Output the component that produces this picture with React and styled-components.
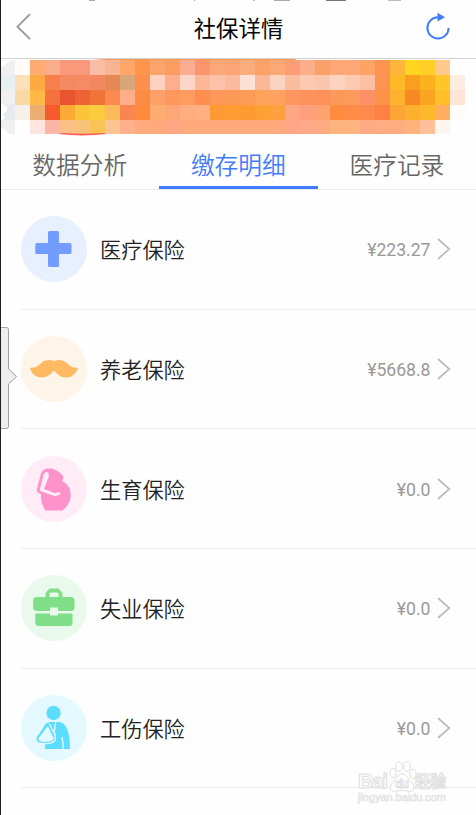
import React from "react";
import styled, { createGlobalStyle } from "styled-components";

const Global = createGlobalStyle`
  * { box-sizing: border-box; }
  body { margin: 0; background: #fefefe; }
`;

const Screen = styled.main`
  position: relative;
  display: flex;
  flex-direction: column;
  width: 476px;
  height: 815px;
  overflow: hidden;
  border-left: 1px solid #202020;
  background: #fefefe;
  font-family: Roboto, "Noto Sans CJK SC", sans-serif;
`;

const Header = styled.header`
  display: grid;
  grid-template-columns: 60px 1fr 60px;
  align-items: center;
  height: 59px;
  padding-bottom: 4px;
  border-bottom: 1px solid #d2d2d2;
`;

const Title = styled.h1`
  margin: 0;
  padding-bottom: 1px;
  text-align: center;
  font-family: "Noto Sans CJK SC", sans-serif;
  font-size: 22.4px;
  line-height: 32px;
  font-weight: 400;
  color: #050505;
`;

const IconButton = styled.button`
  display: flex;
  justify-content: ${(p) => (p.$end ? "flex-end" : "flex-start")};
  padding: 0 ${(p) => (p.$end ? 25 : 0)}px 0 ${(p) => (p.$end ? 0 : 14)}px;
  border: 0;
  background: none;
`;

const StatusTraces = styled.div`
  position: absolute;
  top: 0;
  left: 0;
  width: 475px;
  height: 1px;
  background: linear-gradient(90deg, transparent 88px, #aaa 88px 94px, transparent 94px 193px, #999 193px 194px,
    transparent 194px 252px, #bbb 252px 254px, transparent 254px 273px, #aaa 273px 289px, transparent 289px 325px,
    #777 325px 345px, transparent 345px 387px, #bbb 387px 400px, transparent 400px);
`;

const Banner = styled.section`
  position: relative;
  display: grid;
  grid-template-columns: repeat(31, 15px);
  grid-template-rows: repeat(4, 15px) 14px;
  height: 80px;
  margin-left: -1px;
  padding-top: 1px;
  background: linear-gradient(90deg, transparent 92px, #ff9950 105px 295px, transparent 296px) 0 0 / 100% 2px no-repeat;
`;

const Tile = styled.i`
  background: ${(p) => p.$color};
`;

const BannerArc = styled.svg`
  position: absolute;
  left: 40px;
  top: 73px;
`;

const TornEdge = styled.svg`
  position: absolute;
  left: 0;
  top: 0;
`;

const Tabs = styled.nav`
  display: grid;
  grid-template-columns: repeat(3, 158.6px);
  height: 51px;
  margin-left: -0.6px;
  border-bottom: 1px solid #e9e9e9;
`;

const Tab = styled.a`
  padding-top: 7px;
  text-align: center;
  font-family: "Noto Sans CJK SC", sans-serif;
  font-size: 23.7px;
  line-height: 36px;
  height: 50px;
  font-weight: 350;
  color: ${(p) => (p.$active ? "#427bff" : "#666")};
  border-bottom: 3px solid ${(p) => (p.$active ? "#427bff" : "transparent")};
`;

const List = styled.ul`
  margin: 0;
  padding: 0 0 0 20px;
  list-style: none;
`;

const Row = styled.li`
  display: flex;
  align-items: center;
  height: 119.65px;
  padding-right: 25px;
  border-bottom: 1px solid #eee;
`;

const Badge = styled.span`
  flex: none;
  width: 66px;
  height: 66px;
  border-radius: 50%;
  background: ${(p) => p.$tint};
  color: ${(p) => p.$ink};

  svg { display: block; }
`;

const Name = styled.span`
  flex: 1;
  padding: 0.2px 0 0 13px;
  font-family: "Noto Sans CJK SC", sans-serif;
  font-size: 21.2px;
  line-height: 32px;
  font-weight: 350;
  color: #222;
`;

const Amount = styled.span`
  margin-right: 6.5px;
  padding-top: 2px;
  font-size: 17.6px;
  line-height: 22px;
  color: #999;
`;

const Handle = styled.svg`
  position: absolute;
  left: 0;
  top: 326px;
`;

const Watermark = styled.svg`
  position: absolute;
  left: 354px;
  top: 757px;
`;

const tiles = [
  "f0f0f0 fffcfa ffab72 f9ad8a f9997c f9997c fabda8 f8b594 fea768 fd964c fba56c fd9e60 fbac91 fb9570 fba777 fba475 fcad7e fca268 fca875 fb9d77 fcae89 faa16a fca775 fca775 fda366 fc9550 feb53c ffd51f ffce27 ffca8b fffefe",
  "e7eff3 fcdfbb ffa943 f67f4b f48861 f58b62 f38761 e48854 d8a679 fd904d fdd2c0 fcae8f fcd6c8 fcb896 fcc1ab fbb99d fde1d6 fbb896 fbd4c1 fbbda0 fccab3 fcc6ae fad4c1 fcc9b1 fcbfa4 fd9350 fdb926 fa9e20 fcb21e ffc629 feece2",
  "f0f0f0 f8daa7 ffb944 f5713e e8542f ee6333 f07338 fb8950 ffae8b fb8c44 fea068 fd985c fe9b60 fe8f50 fd985a fd9a57 fd9b57 fda35c fda260 fd965f fd925c fe9058 fc985a fe9a5c fd9066 fd9347 fdb12e f78822 faa422 ffbf28 fee5d7",
  "e6eaee f7efe9 ecad73 f75b2c fcaa36 fbc43a fbcd3e fdba5c f98550 ff8a3e feac72 fea676 ffac7e ffaf80 ff9933 ff9b33 ff9932 ffa035 ffa03f ffa687 ff9f7c ffa272 ff8b40 ff8c46 ff8a4c ff8045 ffa436 fdb02c fdb82c ffae60 fffcfa",
  "f0f0f0 ffffff fee5df fcb4a6 fbc087 f9c377 fac355 fcc48f fdb08a ffab7d ffaa7b ffa684 ffa97e ffaa7b ffaa7c ffaa7c ffaa7c ffaa7c ffaa7c ffa588 ffa88a ffab82 ffb480 ffb480 ffaa84 ffab84 ffad80 ffb27b ffbf99 fff5ef fefefe",
].flatMap((line) => line.split(" "));

const Glyph = ({ children }) => (
  <svg width="66" height="66" viewBox="0 0 66 66" fill="currentColor">{children}</svg>
);

const items = [
  {
    name: "医疗保险", amount: "¥223.27", tint: "#e8efff", ink: "#729dff",
    art: <path d="M28.5 15h8q1.5 0 1.5 1.5V27h11q1.5 0 1.5 1.5v8q0 1.500-1.500 1.500H38v11.500q0 1.500-1.500 1.500h-8Q27 51 27 49.500V38H15.800q-1.500 0-1.500-1.500v-8q0-1.500 1.500-1.500H27V16.500Q27 15 28.500 15Z" />,
  },
  {
    name: "养老保险", amount: "¥5668.8", tint: "#fff4e8", ink: "#ffba61",
    art: <path d="M9 31.700C13.500 32.500 17 30 20 27.300 24 23.500 29.500 23 33 25.500 36.500 23 42 23.500 46 27.300 49 30 52.500 32.500 57 31.700 55 38 50.500 41.500 45 41.500 39.500 41.500 36 38 33 34.500 30 38 26 41.500 20.500 41.500 15 41.500 10.200 37.500 9 31.700Z" />,
  },
  {
    name: "生育保险", amount: "¥0.0", tint: "#ffecf6", ink: "#ff92cb",
    art: (
      <>
        <path d="M22 14.500C24.500 12 31 12 34.500 14 38 15.800 40 17.500 42 20 43 22 41.500 23 41.500 25.500 47 28 49.700 33 49.700 39 49.700 46 46 50.500 41.500 54.500H24.500C21.500 50 19.500 45 20 38.500L17 36.500C15.300 35 15.800 33 16.400 31L19.700 18.500Q20.200 16 22 14.500Z" />
        <path d="M25.500 16C28.300 16.200 28 19.500 27.500 21.500L23 33 34 37.300Q36.500 36 38.800 36.500 40.500 38 38 39.200L33.500 40 19.300 35Q18.300 34.300 18.800 33L22.200 20.500Q23 16.200 25.500 16Z" fill="#ffecf6" />
      </>
    ),
  },
  {
    name: "失业保险", amount: "¥0.0", tint: "#e9f9eb", ink: "#80de88",
    art: (
      <>
        <path fillRule="evenodd" d="M24.500 22V18L28.500 13.500H37.500L41.500 18V22H50Q53.500 22 53.500 25.500V32.500Q53.500 36 50 36H37V32.500H29V36H16Q12.200 36 12.200 32.500V25.500Q12.200 22 16 22ZM28.500 22H37.500V19Q37.500 17.500 36 17.500H30Q28.500 17.500 28.500 19Z" />
        <path d="M14.300 38.500H29V40.500H37V38.500H51.500V47.500Q51.500 51 48 51H18Q14.300 51 14.300 47.500Z" />
      </>
    ),
  },
  {
    name: "工伤保险", amount: "¥0.0", tint: "#e4f9ff", ink: "#5bddff",
    art: (
      <>
        <circle cx="32.500" cy="18" r="7.200" />
        <path d="M25 28.500Q27 27 29 27H37C45.500 27 49 37 49 54H24V48L18 47.500Q14.500 46 16 42Z" />
        <path d="M26.800 31 18 42.500Q16.500 45.500 19 46.300C23 47.500 28 47 31.500 45.300Q33 44.300 32.300 42.500Z" fill="#e4f9ff" />
        <path d="M28.200 28.500 33 38 34.700 27.200M34 38V45.500C32 48 28 48.500 24 48.800M40.800 42Q42.300 47 42.200 54" fill="none" stroke="#e4f9ff" strokeWidth="1.400" />
      </>
    ),
  },
];

export default function App() {
  return (
    <>
      <Global />
      <Screen>
        <StatusTraces />
        <Header>
          <IconButton aria-label="返回">
            <svg width="20" height="28" viewBox="0 0 20 28" fill="none" stroke="#999" strokeWidth="1.900">
              <path d="M15 1.200 2.500 13.700 15 26.200" />
            </svg>
          </IconButton>
          <Title>社保详情</Title>
          <IconButton $end aria-label="刷新">
            <svg width="26" height="30" viewBox="0 0 26 30">
              <path d="M15 5.300H13A10.600 10.600 0 1 0 23.600 15.900" fill="none" stroke="#427bff" strokeWidth="2" />
              <path d="M12.500 .8 20 5.200 12.500 9.600Z" fill="#427bff" />
            </svg>
          </IconButton>
        </Header>
        <Banner>
          {tiles.map((color, i) => <Tile key={i} $color={`#${color}`} />)}
          <BannerArc width="85" height="5">
            <path d="M5 .5Q42 7 80 .5Q42 4.500 5 .5Z" fill="#ffc5bc" />
            <path d="M20 1.500Q42 4.500 65 1.500Q42 2.500 20 1.500Z" fill="#f34c50" stroke="#f65558" strokeWidth=".6" />
          </BannerArc>
          <TornEdge width="16" height="80">
            <path d="M0 0H13Q8 3 5 6L0 8ZM0 43 7 48V52L3 55 5 59 0 62ZM0 68 6 71 8 75 13 80H0Z" fill="#fefefe" />
            <path d="M0 0V1M0 43V62M0 68V80" stroke="#202020" strokeWidth="2" />
          </TornEdge>
        </Banner>
        <Tabs>
          <Tab>数据分析</Tab>
          <Tab $active>缴存明细</Tab>
          <Tab>医疗记录</Tab>
        </Tabs>
        <List>
          {items.map((item) => (
            <Row key={item.name}>
              <Badge $tint={item.tint} $ink={item.ink}><Glyph>{item.art}</Glyph></Badge>
              <Name>{item.name}</Name>
              <Amount>{item.amount}</Amount>
              <svg width="14" height="22" viewBox="0 0 14 22" fill="none" stroke="#bbb" strokeWidth="1.700">
                <path d="M1 1 12.300 11 1 21" />
              </svg>
            </Row>
          ))}
        </List>
        <Handle width="17" height="104">
          <path d="M0 1.500H5.500Q7.500 1.500 7.500 3.500V43L15.500 50.500 7.500 58V100.500Q7.500 102.500 5.500 102.500H0" fill="#eee" stroke="#9ba3aa" />
        </Handle>
        <Watermark width="96" height="50" fill="#fff" stroke="#ddd" strokeWidth="1" fontFamily="Liberation Sans, Noto Sans CJK SC, sans-serif">
          <text x="3" y="31" fontSize="21" fontWeight="700" textLength="30">Bai</text>
          <path d="M47 17C42 17 41 23 37 26 33 31 37 36 42 34Q47 33 52 34C58 36 61 31 57 26 53 23 52 17 47 17Z" />
          <ellipse cx="38" cy="16" rx="3" ry="4.500" />
          <ellipse cx="44" cy="9.500" rx="3.200" ry="4.800" />
          <ellipse cx="52" cy="9.500" rx="3.200" ry="4.800" />
          <ellipse cx="58" cy="17" rx="3" ry="4.500" />
          <text x="40" y="31" fontSize="13" fontWeight="700" textLength="14">du</text>
          <text x="60" y="30" fontSize="15.500" fontWeight="700" textLength="31">经验</text>
          <text x="3" y="44" fontSize="11" strokeWidth=".7" stroke="#e2e2e2" textLength="88">jingyan.baidu.com</text>
        </Watermark>
      </Screen>
    </>
  );
}
